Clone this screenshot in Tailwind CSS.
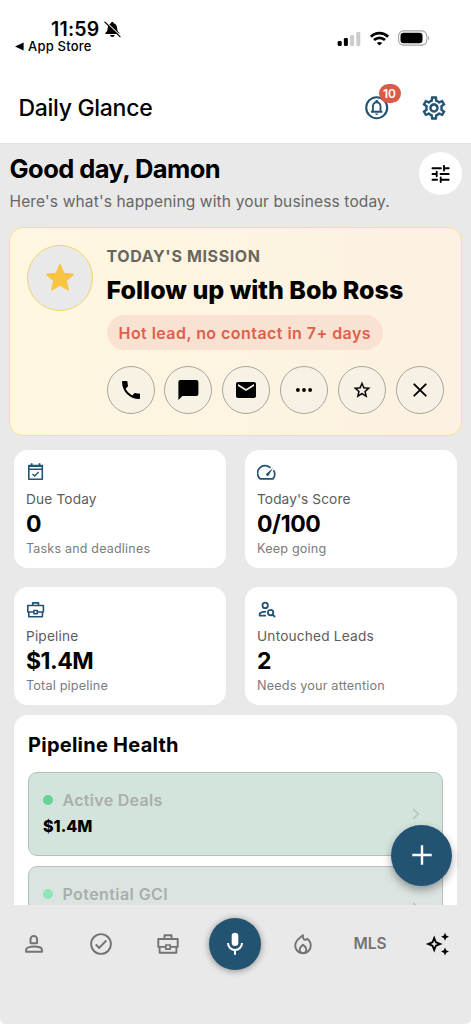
<!DOCTYPE html>
<html lang="en">
<head>
<meta charset="utf-8">
<title>Daily Glance</title>
<script src="https://cdn.jsdelivr.net/npm/@tailwindcss/browser@4"></script>
</head>
<body class="bg-white font-[family-name:Inter,sans-serif] text-black">
<div class="relative flex h-[1024px] w-[471px] flex-col overflow-hidden">

  <!-- Status bar -->
  <div class="flex h-[72px] shrink-0 items-start justify-between">
    <div class="pt-[18px]">
      <div class="flex h-[23px] items-center gap-[5px] pl-[51px]">
        <span class="text-[19.5px] leading-[23px] font-semibold tracking-[0.2px]">11:59</span>
        <svg class="size-[17px]" viewBox="0 0 17 17">
          <path d="M8.3 1c.8 0 1.4.5 1.4 1.2 2.200.7 3.300 2.400 3.400 4.800.1 2.600.8 3.700 2.100 4.700.5.5.3 1.300-.5 1.300H2.100c-.8 0-1-.8-.5-1.300 1.300-1 2-2.100 2.100-4.700.1-2.400 1.200-4.100 3.300-4.800C7 1.500 7.500 1 8.300 1z" fill="#000"/>
          <path d="M6 14h4.700c-.3 1.300-1.200 2-2.350 2S6.300 15.300 6 14z" fill="#000"/>
          <path d="M1.600 0.600l15 14.400" stroke="#fff" stroke-width="1.300"/>
          <path d="M.9 1.100l15.100 14.500" stroke="#000" stroke-width="1.300" stroke-linecap="round"/>
        </svg>
      </div>
      <div class="-mt-[1px] flex h-[12px] items-center gap-[4px] pl-[15px]">
        <svg class="h-[9px] w-[9px]" viewBox="0 0 9 8"><path d="M0 4L8.600 0v8z" fill="#000"/></svg>
        <span class="text-[13px] leading-[12px] font-medium tracking-[0.2px]">App Store</span>
      </div>
    </div>
    <div class="flex items-center gap-[9px] pt-[30px] pr-[41px]">
      <svg class="h-[15px] w-[24px]" viewBox="0 0 24 15">
        <rect x="0.700" y="10" width="4" height="5" rx="1.200"/><rect x="6.900" y="7" width="4" height="8" rx="1.200"/>
        <rect x="13.100" y="4" width="4" height="11" rx="1.200" fill="#ccc"/><rect x="19.300" y="1" width="4" height="14" rx="1.200" fill="#ccc"/>
      </svg>
      <svg class="h-[15px] w-[19px]" viewBox="0 0 19 15" fill="none" stroke="#000" stroke-width="2.800">
        <path d="M.9 5.700C5.800.9 13.200.9 18.100 5.700"/><path d="M4 9.100c3.200-3 7.800-3 11 0"/><path d="M9.500 14.600L6.800 12c1.500-1.300 3.900-1.300 5.400 0z" fill="#000" stroke="none"/>
      </svg>
      <svg class="h-[16px] w-[32px]" viewBox="0 0 32 16">
        <rect x=".6" y=".9" width="28.200" height="14.200" rx="4.800" fill="none" stroke="#a3a3a3" stroke-width="1.100"/>
        <rect x="2.500" y="2.700" width="22" height="10.600" rx="3.200"/><path d="M30.200 5.700c1.500.8 1.500 3.800 0 4.600z" fill="#a3a3a3"/>
      </svg>
    </div>
  </div>

  <!-- App header -->
  <header class="flex h-[72px] shrink-0 items-center justify-between border-b border-[#e2e2e2] pr-[23px] pl-[18.500px]">
    <h1 class="text-[23px] leading-[28px] font-[550] tracking-[-0.3px]">Daily Glance</h1>
    <div class="flex items-center gap-[31px]">
      <div class="relative">
        <svg class="size-[25px]" viewBox="0 0 25 25" fill="none" stroke="#225373" stroke-width="2.100">
          <circle cx="12.700" cy="12.700" r="10.500"/>
          <path d="M7 16.700h11.400M8.900 16.700V11.500c0-2.500 1.700-4.200 3.800-4.200s3.800 1.700 3.800 4.200v5.200" stroke-width="1.900"/>
          <path d="M12.700 5v2.500" stroke-width="2.200"/><path d="M11.100 18.600h3.200c-.2 1-.8 1.400-1.600 1.400s-1.400-.4-1.600-1.400z" fill="#225373" stroke="none"/>
        </svg>
        <span class="absolute top-[-11px] left-[14.500px] flex h-[19px] w-[22px] items-center justify-center rounded-full bg-[#dc5a48] text-[12px] font-semibold text-white">10</span>
      </div>
      <svg class="size-[28px]" viewBox="0 0 24 24" fill="#225373" stroke="#225373" stroke-width=".1"><path d="M19.43 12.98c.04-.32.07-.64.07-.98 0-.34-.03-.66-.07-.98l2.11-1.65c.19-.15.24-.42.12-.64l-2-3.46c-.09-.16-.26-.25-.44-.25-.06 0-.12.01-.17.03l-2.49 1c-.52-.4-1.08-.73-1.69-.98l-.38-2.650C14.46 2.180 14.250 2 14 2h-4c-.25 0-.46.18-.49.42l-.38 2.650c-.61.25-1.170.59-1.690.98l-2.490-1c-.06-.02-.12-.03-.18-.03-.17 0-.34.09-.43.25l-2 3.460c-.13.22-.07.49.12.64l2.110 1.650c-.04.32-.07.65-.07.98 0 .33.03.66.07.98l-2.110 1.650c-.19.15-.24.42-.12.64l2 3.460c.09.16.26.25.44.25.06 0 .12-.01.17-.03l2.490-1c.52.4 1.080.73 1.690.98l.38 2.650c.03.24.24.42.49.42h4c.25 0 .46-.18.49-.42l.38-2.650c.61-.25 1.170-.59 1.690-.98l2.490 1c.06.02.12.03.18.03.17 0 .34-.09.43-.25l2-3.460c.12-.22.07-.49-.12-.64l-2.110-1.650zm-1.980-1.710c.04.31.05.52.05.73 0 .21-.02.43-.05.73l-.14 1.130.89.7 1.080.84-.7 1.210-1.270-.51-1.040-.42-.9.68c-.43.32-.84.56-1.250.73l-1.060.43-.16 1.130-.2 1.350h-1.400l-.19-1.350-.16-1.130-1.060-.43c-.43-.18-.83-.41-1.230-.71l-.91-.7-1.060.43-1.270.51-.7-1.210 1.080-.84.89-.7-.14-1.130c-.03-.31-.05-.54-.05-.74s.02-.43.05-.73l.14-1.130-.89-.7-1.080-.84.7-1.210 1.270.51 1.040.42.9-.68c.43-.32.84-.56 1.250-.73l1.060-.43.16-1.130.2-1.350h1.390l.19 1.350.16 1.130 1.060.43c.43.18.83.41 1.230.71l.91.7 1.060-.43 1.270-.51.7 1.210-1.070.85-.89.7.14 1.130zM12 8c-2.210 0-4 1.790-4 4s1.790 4 4 4 4-1.790 4-4-1.790-4-4-4zm0 6c-1.100 0-2-.9-2-2s.9-2 2-2 2 .9 2 2-.9 2-2 2z"/></svg>
    </div>
  </header>

  <!-- Scrolling content -->
  <main class="relative min-h-0 flex-1 overflow-hidden bg-[#e9e9e9]">
    <div class="flex h-[83px] items-start justify-between pt-[9px] pr-[9px] pl-[9.500px]">
      <div>
        <h2 class="text-[25.500px] leading-[32px] font-bold tracking-[-0.57px]">Good day, Damon</h2>
        <p class="mt-[5px] text-[15.500px] leading-[24px] tracking-[0.15px] text-[#666]">Here's what's happening with your business today.</p>
      </div>
      <div class="-mt-[1px] flex size-[43px] items-center justify-center rounded-full bg-white">
        <svg class="h-[18px] w-[19px]" viewBox="0 0 19 18" fill="none" stroke="#000" stroke-width="1.900" stroke-linecap="round"><path d="M1.500 3.200h8.400M13 3.200h4.700M13 .9v4.600M1.500 9h4M5.700 6.700v4.600M9.500 9h8.200M1.500 14.800h4.600M9.700 14.800h8M9.700 12.500v4.600"/></svg>
      </div>
    </div>

    <!-- Mission -->
    <section class="ml-[9px] flex h-[209px] w-[453px] gap-[14px] rounded-[14px] border-[1.500px] border-[#f8e08f] bg-linear-to-r from-[#fff7e0] to-[#fcf1e2] pt-[17px] pl-[16.500px]">
      <div class="flex size-[66px] shrink-0 items-center justify-center rounded-full border-[1.500px] border-[#f4d36c] bg-[#e9e9e9]">
        <svg class="size-[30px]" viewBox="0 0 30 30" fill="#f7c443" stroke="#f7c443" stroke-width="2" stroke-linejoin="round"><path d="M15 2.200l3.600 8.500 9.200.8-7 6 2.100 9L15 21.700l-7.900 4.800 2.100-9-7-6 9.200-.8z"/></svg>
      </div>
      <div>
        <p class="text-[16px] leading-[22px] font-bold tracking-[0.62px] text-[#6a665d]">TODAY'S MISSION</p>
        <h3 class="mt-[6.500px] text-[25px] leading-[32px] font-extrabold tracking-[0px]">Follow up with Bob Ross</h3>
        <p class="mt-[9.500px] flex h-[35px] w-[276px] items-center rounded-full bg-[#f9e2d1] pl-[12px] text-[16px] font-semibold tracking-[0.45px] whitespace-nowrap text-[#e05f4c]">Hot lead, no contact in 7+ days</p>
        <div class="mt-[16px] flex gap-[9.900px] *:flex *:size-[48px] *:items-center *:justify-center *:rounded-full *:border-[1.300px] *:border-[#aba69b] *:bg-[#f4f0e8]/60">
          <div><svg class="size-[24px]" viewBox="0 0 24 24"><path d="M6.620 10.790c1.440 2.830 3.760 5.140 6.590 6.590l2.200-2.200c.27-.27.67-.36 1.020-.24 1.120.37 2.330.57 3.570.57.55 0 1 .45 1 1V20c0 .55-.45 1-1 1-9.390 0-17-7.610-17-17 0-.55.45-1 1-1h3.500c.55 0 1 .45 1 1 0 1.250.2 2.450.57 3.570.11.35.03.74-.25 1.020l-2.200 2.200z"/></svg></div>
          <div><svg class="size-[24px] translate-x-[0.400px]" viewBox="0 0 24 24"><path d="M20 2H4c-1.100 0-2 .9-2 2v18l4-4h14c1.100 0 2-.9 2-2V4c0-1.100-.9-2-2-2z"/></svg></div>
          <div><svg class="size-[24px]" viewBox="0 0 24 24"><path d="M20 4H4c-1.100 0-2 .9-2 2v12c0 1.100.9 2 2 2h16c1.100 0 2-.9 2-2V6c0-1.100-.9-2-2-2zm0 4l-8 5-8-5V6l8 5 8-5v2z"/></svg></div>
          <div><svg class="size-[24px]" viewBox="0 0 24 24"><circle cx="5.900" cy="12" r="1.900"/><circle cx="12" cy="12" r="1.900"/><circle cx="18.100" cy="12" r="1.900"/></svg></div>
          <div><svg class="size-[20px]" viewBox="0 0 24 24" stroke="#000" stroke-width=".2"><path d="M22 9.240l-7.190-.62L12 2 9.190 8.630 2 9.240l5.460 4.730L5.820 21 12 17.270 18.180 21l-1.630-7.030L22 9.240zM12 15.400l-3.760 2.270 1-4.280-3.320-2.880 4.380-.38L12 6.100l1.710 4.040 4.380.38-3.320 2.880 1 4.280L12 15.400z"/></svg></div>
          <div><svg class="size-[24px]" viewBox="0 0 24 24" fill="none" stroke="#000" stroke-width="1.900" stroke-linecap="round"><path d="M6.300 6.300l11.400 11.400M17.700 6.300L6.300 17.700"/></svg></div>
        </div>
      </div>
    </section>

    <!-- Metrics -->
    <section class="mx-[14px] mt-[14px] grid grid-cols-2 gap-x-[19px] gap-y-[19px] *:h-[118px] *:rounded-[14px] *:bg-white *:px-[12px] *:pt-[12px]">
      <div>
        <svg class="size-[20px]" viewBox="0 0 20 20" fill="none" stroke="#225373" stroke-width="1.600"><path d="M2.800 3.600h13.500v13.600H2.800zM2.800 7.200h13.500" stroke-linejoin="round"/><path d="M2.800 4h13.500" stroke-width="2"/><path d="M5.600 1.200v2.500M13.500 1.200v2.500" stroke-width="1.800"/><path d="M6.500 12l2.200 2.100 4-4.100" stroke-width="1.400"/></svg>
        <p class="mt-[8px] text-[13.700px] leading-[18px] tracking-[0.15px] text-[#5c5c5c]">Due Today</p>
        <p class="mt-[2px] text-[23px] leading-[29px] font-bold tracking-[-0.5px]">0</p>
        <p class="mt-[2px] text-[12.500px] leading-[16px] tracking-[0.2px] text-[#7b7b7b]">Tasks and deadlines</p>
      </div>
      <div>
        <svg class="size-[20px] translate-y-[0.700px]" viewBox="0 0 20 20" fill="none" stroke="#225373" stroke-width="1.700" stroke-linecap="round"><path d="M13 4.700A7.500 7.500 0 0 0 3.200 16.200h12.800a7.500 7.500 0 0 0 .9-8.100" stroke-linejoin="round"/><path d="M16 5.300l-4.400 7.400c-1.200 1.500-3.300-.2-2.200-1.700z" fill="#225373" stroke="none"/></svg>
        <p class="mt-[8px] text-[13.700px] leading-[18px] tracking-[0.08px] text-[#5c5c5c]">Today's Score</p>
        <p class="mt-[2px] text-[23px] leading-[29px] font-bold tracking-[-0.4px]">0/100</p>
        <p class="mt-[2px] text-[12.700px] leading-[16px] tracking-[0.15px] text-[#7b7b7b]">Keep going</p>
      </div>
      <div>
        <svg class="size-[20px] translate-y-[0.700px]" viewBox="0 0 20 20" fill="none" stroke="#225373" stroke-width="1.600" stroke-linejoin="round"><path d="M1.800 5.800h15.600v6.500H1.800zM2.800 12.300v4.700h13.600v-4.700M6.700 5.800V3.200h5.800v2.600"/><path d="M7.900 10.900h3.400v3.200H7.900z" fill="#fff" stroke-width="1.500"/></svg>
        <p class="mt-[8px] text-[13.700px] leading-[18px] tracking-[0.15px] text-[#5c5c5c]">Pipeline</p>
        <p class="mt-[2px] text-[23px] leading-[29px] font-bold tracking-[-0.5px]">$1.4M</p>
        <p class="mt-[2px] text-[12.700px] leading-[16px] tracking-[0.15px] text-[#7b7b7b]">Total pipeline</p>
      </div>
      <div>
        <svg class="size-[20px] translate-y-[0.700px]" viewBox="0 0 20 20" fill="none" stroke="#225373" stroke-width="1.800"><circle cx="8.200" cy="5.700" r="2.700"/><path d="M9 12c-3 0-5.700.9-6.400 2.300v1.600H9" stroke-linejoin="round"/><circle cx="13.600" cy="12.900" r="2.700"/><path d="M15.400 14.700l2.600 2.600"/></svg>
        <p class="mt-[8px] text-[13.700px] leading-[18px] tracking-[0.18px] text-[#5c5c5c]">Untouched Leads</p>
        <p class="mt-[2px] text-[23px] leading-[29px] font-bold tracking-[-0.5px]">2</p>
        <p class="mt-[2px] text-[12.700px] leading-[16px] tracking-[0.150px] text-[#7b7b7b]">Needs your attention</p>
      </div>
    </section>

    <!-- Pipeline health -->
    <section class="mx-[14px] mt-[10px] h-[300px] rounded-t-[14px] bg-white px-[14px] pt-[16px]">
      <h3 class="text-[20px] leading-[28px] font-bold tracking-[0.25px]">Pipeline Health</h3>
      <div class="mt-[13px] flex h-[84px] items-center justify-between rounded-[9px] border-[1.300px] border-[#b4c2bc] bg-[#d3e4dd] pr-[22px] pl-[14px]">
        <div class="flex h-full flex-col pt-[16px]">
          <div class="flex items-center gap-[9.500px] text-[16px] leading-[22px] font-semibold tracking-[0.3px] text-[#a9aeac]"><span class="size-[10px] rounded-full bg-[#68d299]"></span>Active Deals</div>
          <p class="mt-[4px] text-[16px] leading-[22px] font-extrabold tracking-[0px]">$1.4M</p>
        </div>
        <svg class="h-[12px] w-[8px]" viewBox="0 0 8 12" fill="none" stroke="#b9c4c0" stroke-width="1.700"><path d="M1.200 1.200L6.200 6l-5 4.800"/></svg>
      </div>
      <div class="mt-[10px] flex h-[84px] items-center justify-between rounded-[9px] border-[1.300px] border-[#b7c2be] bg-[#dbe4e0] pr-[22px] pl-[14px]">
        <div class="flex h-full flex-col pt-[16px]">
          <div class="flex items-center gap-[9.500px] text-[16px] leading-[22px] font-semibold tracking-[0.42px] text-[#a9aeac]"><span class="size-[10px] rounded-full bg-[#8de5b8]"></span>Potential GCI</div>
        </div>
        <svg class="h-[12px] w-[8px]" viewBox="0 0 8 12" fill="none" stroke="#b9c4c0" stroke-width="1.700"><path d="M1.200 1.200L6.200 6l-5 4.800"/></svg>
      </div>
    </section>

    <!-- Add button -->
    <button class="absolute right-[19px] bottom-[19px] flex size-[61px] items-center justify-center rounded-full bg-[#225373] shadow-[0_4px_8px_rgba(0,0,0,0.35)]">
      <svg class="size-[20px]" viewBox="0 0 20 20" stroke="#fff" stroke-width="2.400"><path d="M10 .3v19.400M.3 10h19.400"/></svg>
    </button>
  </main>

  <!-- Tab bar -->
  <nav class="h-[119.500px] shrink-0 rounded-b-[5px] bg-[#e9e9e9]">
    <div class="grid h-[79px] grid-cols-7 items-center justify-items-center">
      <svg class="size-[22px]" viewBox="0 0 22 22" fill="none" stroke="#737373" stroke-width="2" stroke-linejoin="round"><path d="M7.500 9.400V6.300a3.300 3.300 0 0 1 6.600 0v3.100c0 .5-.4.900-.9.900H8.400a.9.900 0 0 1-.9-.9z"/><path d="M3.100 18.700v-2.200c0-1.700 3.500-2.900 7.900-2.900s7.900 1.200 7.900 2.900v2.200z"/></svg>
      <svg class="size-[22px]" viewBox="0 0 22 22" fill="none" stroke="#737373" stroke-width="1.900"><circle cx="11" cy="11" r="9.900"/><path d="M5.700 11.500l3.500 3.300 7.100-7.300"/></svg>
      <svg class="size-[24px]" viewBox="0 0 24 24" fill="none" stroke="#737373" stroke-width="1.900" stroke-linejoin="round"><path d="M2.300 7h19.400v7.900H2.300zM3.600 14.900v5.900h16.800v-5.900M8.500 7V3.300h7V7"/><path d="M9.800 13h4.400v4.200H9.800z" fill="#e9e9e9" stroke-width="1.700"/></svg>
      <div class="flex size-[52px] items-center justify-center rounded-full bg-[#225373] shadow-[0_1px_7px_rgba(0,0,0,0.4)]">
        <svg class="size-[26px]" viewBox="0 0 26 26"><rect x="9.700" y="1.800" width="6.600" height="13.200" rx="3.300" fill="#fff"/><path d="M6 12a7 7 0 0 0 14 0M13 19v4.700" fill="none" stroke="#fff" stroke-width="2"/></svg>
      </div>
      <svg class="size-[22px]" viewBox="0 0 22 22" fill="none" stroke="#737373" stroke-width="1.900" stroke-linejoin="round"><path d="M11 2.200C6 5.600 3.200 8.600 3.200 12.500c0 4.300 3.400 7.700 7.800 7.700s7.800-3.400 7.800-7.700c0-2.800-1.400-5.200-3.700-6.800-.5.700-1.200 1.100-2 1.100C11.500 6.800 10.700 4.800 11 2.200z"/><path d="M11 11.700l-2.300 2.300c-1.700 1.700-1.500 6 2.300 6.100 3.800-.1 4-4.400 2.300-6.100z"/></svg>
      <span class="text-[15.500px] leading-[20px] font-semibold tracking-[0px] text-[#737373]">MLS</span>
      <svg class="h-[24px] w-[24px]" viewBox="0 0 24 24"><path d="M9.200 3.600l2.400 6 6 2.400-6 2.400-2.400 6-2.400-6-6-2.400 6-2.400zM9.200 8.700l-1 2.300-2.300 1 2.300 1 1 2.300 1-2.300 2.300-1-2.300-1z" fill-rule="evenodd"/><path d="M20 .7l1.200 2.800L24 4.700l-2.800 1.200L20 8.700l-1.200-2.800L16 4.700l2.800-1.200zM20 15.500l1.200 2.800L24 19.500l-2.800 1.200L20 23.500l-1.200-2.800L16 19.500l2.800-1.200z"/></svg>
    </div>
  </nav>
</div>
</body>
</html>
